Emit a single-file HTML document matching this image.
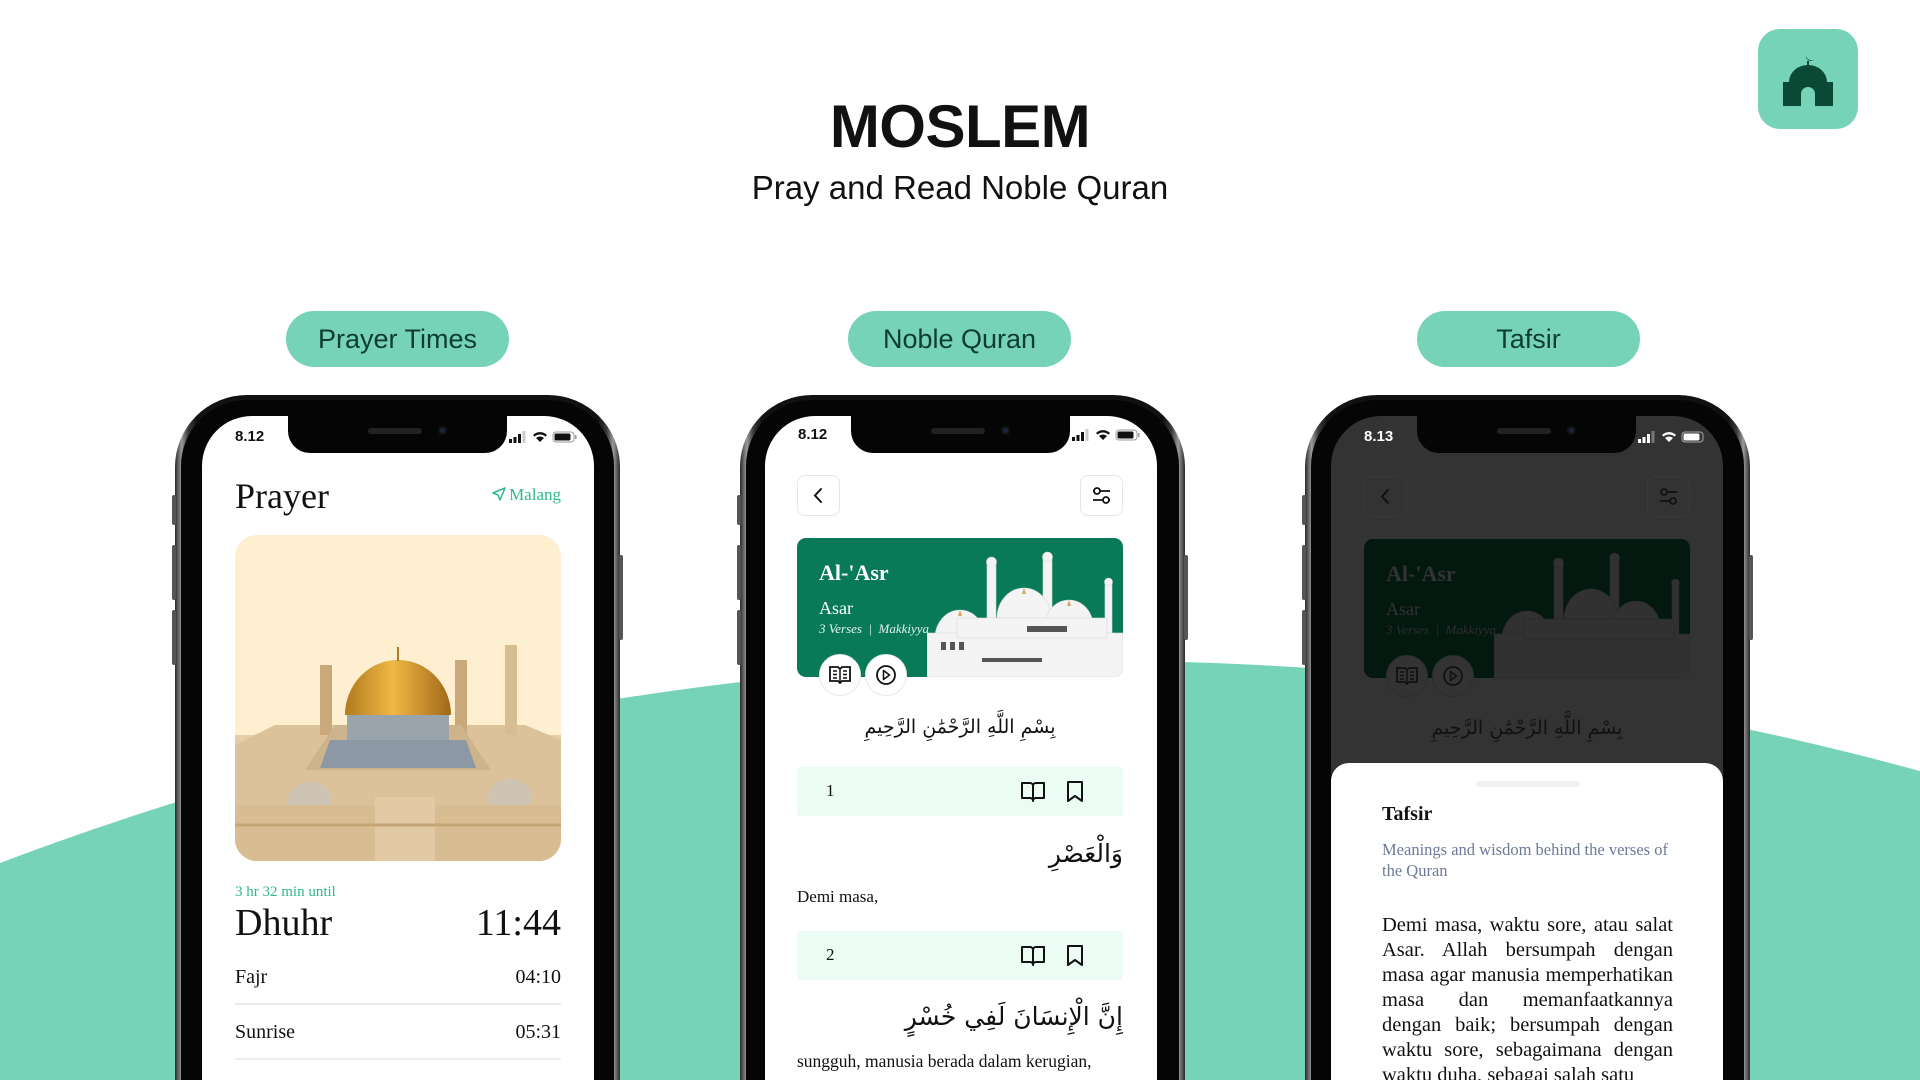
<!DOCTYPE html>
<html><head><meta charset="utf-8">
<style>
*{margin:0;padding:0;box-sizing:border-box}
html,body{width:1920px;height:1080px;overflow:hidden}
body{background:#fff;font-family:"Liberation Sans",sans-serif}
#wrap{position:relative;width:1920px;height:1080px;overflow:hidden}
.abs{position:absolute}
.title{position:absolute;left:0;width:1920px;text-align:center;top:92px;font-size:60px;font-weight:bold;color:#111;letter-spacing:-0.5px}
.sub{position:absolute;left:0;width:1920px;text-align:center;top:169px;font-size:33px;color:#111}
.pill{position:absolute;top:311px;width:223px;height:56px;border-radius:28px;background:#76d3b7;color:#0f3d30;font-size:27px;text-align:center;line-height:56px}
.logo{position:absolute;left:1758px;top:29px;width:100px;height:100px;border-radius:22px;background:#76d3b7}
.phone{position:absolute;top:395px;width:445px;height:685px;border-radius:72px 72px 0 0;background:linear-gradient(90deg,#2a2a2a 0%,#9a9a9a 1.5%,#3a3a3a 3%,#111 5%,#111 95%,#3a3a3a 97%,#9a9a9a 98.5%,#2a2a2a 100%)}
.phone:before{content:"";position:absolute;left:6px;top:5px;right:6px;bottom:0;border-radius:66px 66px 0 0;background:#050505}
.btn{position:absolute;width:4px;background:#555;border-radius:2px}
.screen{position:absolute;left:27px;top:21px;width:392px;height:664px;border-radius:50px 50px 0 0;background:#fff;overflow:hidden;font-family:"Liberation Serif",serif}
.notch{position:absolute;left:86px;top:-2px;width:219px;height:39px;background:#050505;border-radius:0 0 22px 22px}
.notch .sp{position:absolute;left:80px;top:14px;width:54px;height:6px;border-radius:3px;background:#222}
.notch .cam{position:absolute;left:150px;top:12px;width:9px;height:9px;border-radius:50%;background:#1a2440;box-shadow:inset 0 0 0 2px #111}
.time{position:absolute;left:33px;top:12px;font-family:"Liberation Sans",sans-serif;font-weight:bold;font-size:15px;color:#111}
.stat{position:absolute;right:17px;top:14px}
.box{position:absolute;width:43px;height:41px;border:1px solid #e5e7eb;border-radius:8px;background:#fff}
.row{position:absolute;left:32px;width:326px;height:49px;background:#ecfbf3;border-radius:3px}
.ar{position:absolute;right:34px;font-family:"DejaVu Sans",sans-serif;direction:rtl;color:#111}
</style></head><body><div id="wrap">
<svg class="abs" style="left:0;top:0" width="1920" height="1080" viewBox="0 0 1920 1080"><circle cx="1101" cy="3762" r="3101" fill="#76d3b7"/></svg>
<div class="title">MOSLEM</div>
<div class="sub">Pray and Read Noble Quran</div>
<div class="logo"><svg width="100" height="100" viewBox="0 0 100 100"><path d="M48 27a5 5 0 0 0 8 4 6 6 0 0 1-8-4z" fill="#0a4a35"/><rect x="49" y="32" width="2" height="5" fill="#0a4a35"/><path d="M25 53h6a19 17 0 0 1 38 0h6v24H57V65a7 7 0 0 0-14 0v12H25z" fill="#0a4a35"/></svg></div>

<div class="pill" style="left:286px">Prayer Times</div>
<div class="pill" style="left:848px">Noble Quran</div>
<div class="pill" style="left:1417px">Tafsir</div>

<!-- PHONE 1 -->
<div class="phone" style="left:175px">
<div class="btn" style="left:-3px;top:100px;height:30px"></div><div class="btn" style="left:-3px;top:150px;height:55px"></div><div class="btn" style="left:-3px;top:215px;height:55px"></div><div class="btn" style="right:-3px;top:160px;height:85px"></div>
<div class="screen">
<div class="notch"><div class="sp"></div><div class="cam"></div></div>
<div class="time">8.12</div>
<svg class="stat" width="68" height="14" viewBox="0 0 68 14"><rect x="0" y="9" width="3" height="4" fill="#111"/><rect x="4.5" y="7" width="3" height="6" fill="#111"/><rect x="9" y="4" width="3" height="9" fill="#111"/><rect x="13.5" y="1" width="3" height="12" fill="#ccc"/><path d="M24 5a10 10 0 0 1 14 0l-1.6 1.6a8 8 0 0 0-10.8 0zM27 8a6 6 0 0 1 8 0L31 12z" fill="#111"/><rect x="44" y="2" width="21" height="10" rx="3" fill="none" stroke="#999"/><rect x="45.5" y="3.5" width="16" height="7" rx="1.5" fill="#111"/><rect x="66" y="5" width="1.5" height="4" fill="#999"/></svg>
<div class="abs" style="left:33px;top:59px;font-size:36px;color:#111">Prayer</div>
<div class="abs" style="right:33px;top:69px;font-size:17px;color:#2fb98a"><svg width="14" height="14" viewBox="0 0 14 14" style="vertical-align:-1px;margin-right:3px"><path d="M13 1L1 6l5 2 2 5z" fill="none" stroke="#2fb98a" stroke-width="1.5" stroke-linejoin="round"/></svg>Malang</div>
<div class="abs" style="left:33px;top:119px;width:326px;height:326px;border-radius:22px;overflow:hidden;background:#fdefcf">
<svg width="326" height="326" viewBox="0 0 326 326">
<defs><linearGradient id="g" x1="0" x2="1"><stop offset="0" stop-color="#b07a1e"/><stop offset=".45" stop-color="#f0b845"/><stop offset="1" stop-color="#a06818"/></linearGradient></defs>
<rect x="0" y="200" width="326" height="126" fill="#e6cfa8"/>
<path d="M0 210l40-20h250l36 15v121H0z" fill="#dcc29a"/>
<rect x="85" y="130" width="12" height="70" fill="#c9a87a"/><rect x="220" y="125" width="12" height="75" fill="#c9a87a"/><rect x="270" y="110" width="12" height="90" fill="#d7bd94"/>
<path d="M70 235l30-45h126l30 45z" fill="#cdb48d"/>
<rect x="112" y="180" width="102" height="25" fill="#9aa4ad"/>
<path d="M95 205h136l10 28H85z" fill="#8c98a3"/>
<path d="M110 180a53 55 0 0 1 106 0z" fill="url(#g)"/>
<rect x="162" y="112" width="2" height="14" fill="#b07a1e"/>
<ellipse cx="75" cy="265" rx="22" ry="18" fill="#cfc4b4"/><ellipse cx="275" cy="262" rx="22" ry="18" fill="#cfc4b4"/>
<rect x="0" y="270" width="326" height="56" fill="#d8bd93"/>
<rect x="140" y="262" width="60" height="64" fill="#e2cba4"/>
<path d="M0 290h326" stroke="#c4a676" stroke-width="3"/>
</svg></div>
<div class="abs" style="left:33px;top:468px;font-size:15px;color:#2fb98a">3 hr 32 min until</div>
<div class="abs" style="left:33px;top:485px;font-size:38px;color:#111">Dhuhr</div>
<div class="abs" style="right:33px;top:485px;font-size:38px;color:#111">11:44</div>
<div class="abs" style="left:33px;top:550px;font-size:20px;color:#111">Fajr</div>
<div class="abs" style="right:33px;top:550px;font-size:20px;color:#111">04:10</div>
<div class="abs" style="left:33px;top:587px;width:326px;height:2px;background:#e8ebf0"></div>
<div class="abs" style="left:33px;top:605px;font-size:20px;color:#111">Sunrise</div>
<div class="abs" style="right:33px;top:605px;font-size:20px;color:#111">05:31</div>
<div class="abs" style="left:33px;top:642px;width:326px;height:2px;background:#e8ebf0"></div>
</div></div>

<!-- PHONE 2 -->
<div class="phone" style="left:740px">
<div class="btn" style="left:-3px;top:100px;height:30px"></div><div class="btn" style="left:-3px;top:150px;height:55px"></div><div class="btn" style="left:-3px;top:215px;height:55px"></div><div class="btn" style="right:-3px;top:160px;height:85px"></div>
<div class="screen" style="left:25px">
<div class="notch"><div class="sp"></div><div class="cam"></div></div>
<div class="time" style="top:10px">8.12</div>
<svg class="stat" style="top:12px" width="68" height="14" viewBox="0 0 68 14"><rect x="0" y="9" width="3" height="4" fill="#111"/><rect x="4.5" y="7" width="3" height="6" fill="#111"/><rect x="9" y="4" width="3" height="9" fill="#111"/><rect x="13.5" y="1" width="3" height="12" fill="#ccc"/><path d="M24 5a10 10 0 0 1 14 0l-1.6 1.6a8 8 0 0 0-10.8 0zM27 8a6 6 0 0 1 8 0L31 12z" fill="#111"/><rect x="44" y="2" width="21" height="10" rx="3" fill="none" stroke="#999"/><rect x="45.5" y="3.5" width="16" height="7" rx="1.5" fill="#111"/><rect x="66" y="5" width="1.5" height="4" fill="#999"/></svg>
<div class="box" style="left:32px;top:59px"><svg width="41" height="39" viewBox="0 0 41 39"><path d="M23 13l-6 6.5 6 6.5" fill="none" stroke="#111" stroke-width="2" stroke-linecap="round"/></svg></div>
<div class="box" style="left:315px;top:59px"><svg width="41" height="39" viewBox="0 0 41 39"><path d="M12 15h17M12 24h17" stroke="#111" stroke-width="1.8"/><circle cx="16" cy="15" r="3" fill="#fff" stroke="#111" stroke-width="1.8"/><circle cx="25" cy="24" r="3" fill="#fff" stroke="#111" stroke-width="1.8"/></svg></div>
<div class="abs" style="left:32px;top:122px;width:326px;height:139px;border-radius:9px;background:#087a57;overflow:hidden">
<div class="abs" style="left:22px;top:22px;font-size:22px;font-weight:bold;color:#fff">Al-'Asr</div>
<div class="abs" style="left:22px;top:60px;font-size:18px;color:#fff">Asar</div>
<div class="abs" style="left:22px;top:83px;font-size:13px;font-style:italic;color:#e6f3ee">3 Verses &nbsp;|&nbsp; Makkiyya</div>
<svg class="abs" style="left:130px;top:0" width="196" height="139" viewBox="0 0 196 139">
<g fill="#f4f4f4" stroke="#d9d9d9" stroke-width=".6">
<rect x="60" y="25" width="9" height="90"/><rect x="116" y="20" width="9" height="95"/><rect x="178" y="45" width="7" height="75"/>
<circle cx="64.5" cy="24" r="5"/><circle cx="120.5" cy="19" r="5"/><circle cx="181.5" cy="44" r="4"/>
<path d="M8 100a25 28 0 0 1 50 0z"/><path d="M70 80a27 30 0 0 1 54 0z"/><path d="M118 88a24 26 0 0 1 48 0z"/><path d="M40 112a22 20 0 0 1 44 0z"/><path d="M150 118a22 20 0 0 1 44 0z"/>
<rect x="0" y="95" width="196" height="44"/><rect x="30" y="80" width="150" height="20"/>
</g>
<g fill="#555"><rect x="14" y="104" width="5" height="8"/><rect x="23" y="104" width="5" height="8"/><rect x="32" y="104" width="5" height="8"/><rect x="55" y="120" width="60" height="4"/><rect x="100" y="88" width="40" height="6"/></g>
<g fill="#d9a45a"><path d="M33 72l-2 6h4z"/><path d="M97 50l-2 6h4z"/><path d="M142 62l-2 6h4z"/></g>
</svg></div>
<div class="abs" style="left:54px;top:238px;width:42px;height:42px;border-radius:50%;background:#fff;border:1px solid #e8e8e8"><svg width="40" height="40" viewBox="0 0 40 40"><path d="M10 12h8l2 2 2-2h8v14h-8l-2 2-2-2h-8z" fill="none" stroke="#111" stroke-width="1.8"/><path d="M20 14v14M13 16h4M13 19.5h4M13 23h4M23 16h4M23 19.5h4M23 23h4" stroke="#111" stroke-width="1.5"/></svg></div>
<div class="abs" style="left:100px;top:238px;width:42px;height:42px;border-radius:50%;background:#fff;border:1px solid #e8e8e8"><svg width="40" height="40" viewBox="0 0 40 40"><circle cx="20" cy="20" r="9" fill="none" stroke="#111" stroke-width="1.8"/><path d="M17.5 15.5l6 4.5-6 4.5z" fill="none" stroke="#111" stroke-width="1.6" stroke-linejoin="round"/></svg></div>
<div class="abs" style="left:95px;top:300px;width:200px;text-align:center;font-family:'DejaVu Sans',sans-serif;font-size:19px;direction:rtl;color:#111">بِسْمِ اللَّهِ الرَّحْمَٰنِ الرَّحِيمِ</div>
<div class="row" style="top:351px"><div class="abs" style="left:29px;top:14px;font-size:17px;color:#111">1</div>
<svg class="abs" style="left:224px;top:13px" width="80" height="24" viewBox="0 0 80 24"><path d="M1 3h8a3 3 0 0 1 3 3v15a3 3 0 0 0-3-3H1zM23 3h-8a3 3 0 0 0-3 3v15a3 3 0 0 1 3-3h8z" fill="none" stroke="#111" stroke-width="2" stroke-linejoin="round"/><path d="M47 2h14v19l-7-5-7 5z" fill="none" stroke="#111" stroke-width="2" stroke-linejoin="round"/></svg></div>
<div class="ar" style="top:423px;font-size:25px">وَالْعَصْرِ</div>
<div class="abs" style="left:32px;top:471px;font-size:17px;color:#111">Demi masa,</div>
<div class="row" style="top:515px"><div class="abs" style="left:29px;top:14px;font-size:17px;color:#111">2</div>
<svg class="abs" style="left:224px;top:13px" width="80" height="24" viewBox="0 0 80 24"><path d="M1 3h8a3 3 0 0 1 3 3v15a3 3 0 0 0-3-3H1zM23 3h-8a3 3 0 0 0-3 3v15a3 3 0 0 1 3-3h8z" fill="none" stroke="#111" stroke-width="2" stroke-linejoin="round"/><path d="M47 2h14v19l-7-5-7 5z" fill="none" stroke="#111" stroke-width="2" stroke-linejoin="round"/></svg></div>
<div class="ar" style="top:586px;font-size:25px">إِنَّ الْإِنسَانَ لَفِي خُسْرٍ</div>
<div class="abs" style="left:32px;top:635px;font-size:17.5px;color:#111;white-space:nowrap">sungguh, manusia berada dalam kerugian,</div>
</div></div>

<!-- PHONE 3 -->
<div class="phone" style="left:1305px">
<div class="btn" style="left:-3px;top:100px;height:30px"></div><div class="btn" style="left:-3px;top:150px;height:55px"></div><div class="btn" style="left:-3px;top:215px;height:55px"></div><div class="btn" style="right:-3px;top:160px;height:85px"></div>
<div class="screen" style="left:26px;background:#333">
<div class="notch"><div class="sp"></div><div class="cam"></div></div>
<div class="time" style="color:#fff">8.13</div>
<svg class="stat" width="68" height="14" viewBox="0 0 68 14"><rect x="0" y="9" width="3" height="4" fill="#fff"/><rect x="4.5" y="7" width="3" height="6" fill="#fff"/><rect x="9" y="4" width="3" height="9" fill="#fff"/><rect x="13.5" y="1" width="3" height="12" fill="#777"/><path d="M24 5a10 10 0 0 1 14 0l-1.6 1.6a8 8 0 0 0-10.8 0zM27 8a6 6 0 0 1 8 0L31 12z" fill="#fff"/><rect x="44" y="2" width="21" height="10" rx="3" fill="none" stroke="#aaa"/><rect x="45.5" y="3.5" width="16" height="7" rx="1.5" fill="#fff"/></svg>
<div class="box" style="left:33px;top:60px;background:#333;border-color:#3a3a3a"><svg width="41" height="39" viewBox="0 0 41 39"><path d="M23 13l-6 6.5 6 6.5" fill="none" stroke="#111" stroke-width="2" stroke-linecap="round"/></svg></div>
<div class="box" style="left:316px;top:60px;background:#333;border-color:#3a3a3a"><svg width="41" height="39" viewBox="0 0 41 39"><path d="M12 15h17M12 24h17" stroke="#111" stroke-width="1.8"/><circle cx="16" cy="15" r="3" fill="#333" stroke="#111" stroke-width="1.8"/><circle cx="25" cy="24" r="3" fill="#333" stroke="#111" stroke-width="1.8"/></svg></div>
<div class="abs" style="left:33px;top:123px;width:326px;height:139px;border-radius:9px;background:#03180f;overflow:hidden">
<div class="abs" style="left:22px;top:22px;font-size:22px;font-weight:bold;color:#333">Al-'Asr</div>
<div class="abs" style="left:22px;top:60px;font-size:18px;color:#333">Asar</div>
<div class="abs" style="left:22px;top:83px;font-size:13px;font-style:italic;color:#2e2e2e">3 Verses &nbsp;|&nbsp; Makkiyya</div>
<svg class="abs" style="left:130px;top:0" width="196" height="139" viewBox="0 0 196 139">
<g fill="#313131" stroke="#2a2a2a" stroke-width=".6">
<rect x="60" y="25" width="9" height="90"/><rect x="116" y="20" width="9" height="95"/><rect x="178" y="45" width="7" height="75"/>
<circle cx="64.5" cy="24" r="5"/><circle cx="120.5" cy="19" r="5"/><circle cx="181.5" cy="44" r="4"/>
<path d="M8 100a25 28 0 0 1 50 0z"/><path d="M70 80a27 30 0 0 1 54 0z"/><path d="M118 88a24 26 0 0 1 48 0z"/><path d="M40 112a22 20 0 0 1 44 0z"/><path d="M150 118a22 20 0 0 1 44 0z"/>
<rect x="0" y="95" width="196" height="44"/><rect x="30" y="80" width="150" height="20"/>
</g></svg></div>
<div class="abs" style="left:55px;top:239px;width:42px;height:42px;border-radius:50%;background:#333;border:1px solid #2d2d2d"><svg width="40" height="40" viewBox="0 0 40 40"><path d="M10 12h8l2 2 2-2h8v14h-8l-2 2-2-2h-8z" fill="none" stroke="#111" stroke-width="1.8"/><path d="M20 14v14M13 16h4M13 19.5h4M13 23h4M23 16h4M23 19.5h4M23 23h4" stroke="#111" stroke-width="1.5"/></svg></div>
<div class="abs" style="left:101px;top:239px;width:42px;height:42px;border-radius:50%;background:#333;border:1px solid #2d2d2d"><svg width="40" height="40" viewBox="0 0 40 40"><circle cx="20" cy="20" r="9" fill="none" stroke="#111" stroke-width="1.8"/><path d="M17.5 15.5l6 4.5-6 4.5z" fill="none" stroke="#111" stroke-width="1.6" stroke-linejoin="round"/></svg></div>
<div class="abs" style="left:96px;top:301px;width:200px;text-align:center;font-family:'DejaVu Sans',sans-serif;font-size:19px;direction:rtl;color:#111">بِسْمِ اللَّهِ الرَّحْمَٰنِ الرَّحِيمِ</div>
<div class="abs" style="left:0;top:347px;width:392px;height:317px;background:#fff;border-radius:18px 18px 0 0;overflow:hidden">
<div class="abs" style="left:145px;top:18px;width:104px;height:6px;border-radius:3px;background:#eef0f4"></div>
<div class="abs" style="left:51px;top:40px;font-size:20px;font-weight:bold;color:#111">Tafsir</div>
<div class="abs" style="left:51px;top:76px;width:295px;font-size:16.5px;line-height:21px;color:#6b7a99">Meanings and wisdom behind the verses of the Quran</div>
<div class="abs" style="left:51px;top:150px;width:291px;height:167px;overflow:hidden;font-size:20.5px;line-height:25px;color:#111;text-align:justify">Demi masa, waktu sore, atau salat Asar. Allah bersumpah dengan masa agar manusia memperhatikan masa dan memanfaatkannya dengan baik; bersumpah dengan waktu sore, sebagaimana dengan waktu duha, sebagai salah satu</div>
</div>
</div></div>
</div></body></html>
